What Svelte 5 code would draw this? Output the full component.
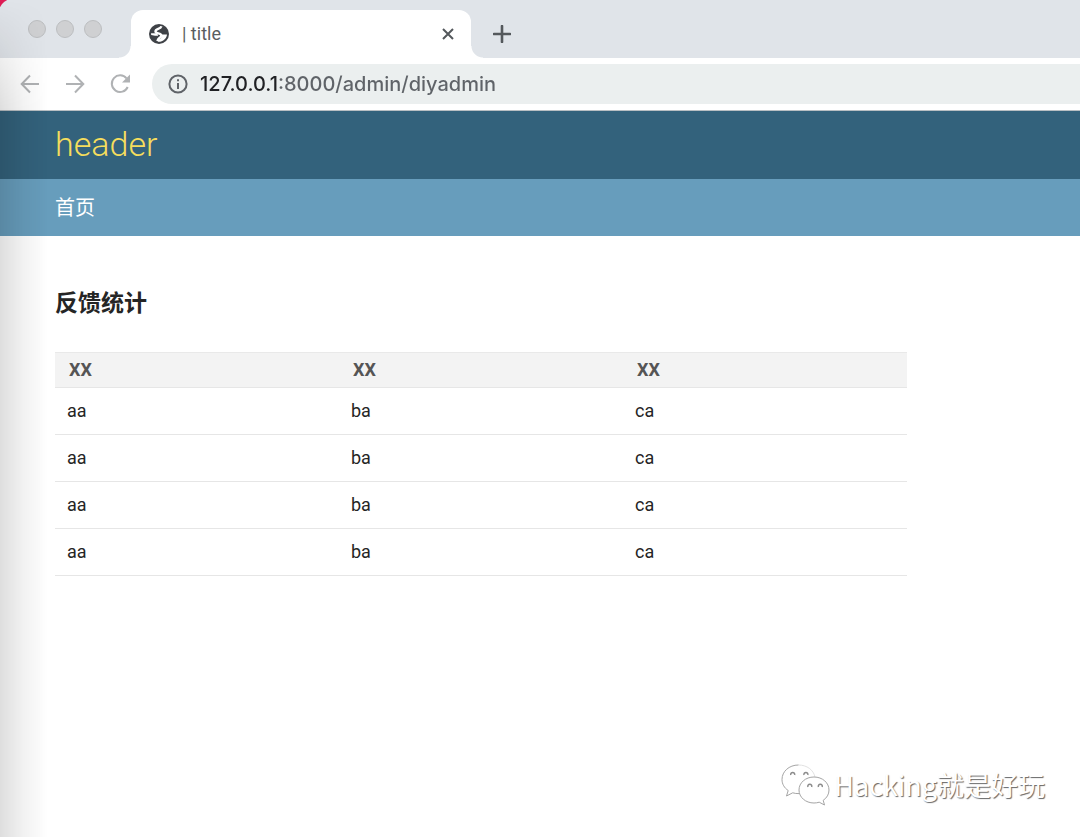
<script>
  const columns = ['XX', 'XX', 'XX'];
  const rows = Array.from({ length: 4 }, () => ['aa', 'ba', 'ca']);
  let address = $state('127.0.0.1:8000/admin/diyadmin');
</script>

<div class="window">
  <div class="tabstrip">
    <div class="lights">
      <button aria-label="Close window"></button>
      <button aria-label="Minimize window"></button>
      <button aria-label="Zoom window"></button>
    </div>
    <div class="tab">
      <svg class="globe" viewBox="0 0 20 20" aria-hidden="true">
        <circle cx="10" cy="10" r="10" fill="#3f4247" />
        <path
          d="M12.400 2.300C11.500 5.500 6.500 4.300 6.500 7.400c0 2.600 5.800 1.200 5.800 4 0 2.500-3.600 2.300-3.800 5.600"
          fill="none"
          stroke="#fff"
          stroke-width="2.400"
        />
        <path d="M2 9.200h4.200c1.900.1 2.900 1.100 2.900 2.500H6L2.200 11zM12 10.400h6c-.4 4-3.800 7.600-9.300 7.300l.2-2.200c2.100-.2 3.800-1.600 3.700-3.500z" fill="#fff" />
      </svg>
      <span class="tab-title">| title</span>
      <button class="icon" aria-label="Close tab">
        <svg width="12" height="12" viewBox="0 0 12 12"><path d="M1 1l10 10M11 1L1 11" stroke="#54585c" stroke-width="2" /></svg>
      </button>
    </div>
    <button class="icon new" aria-label="New tab">
      <svg width="18" height="18" viewBox="0 0 18 18"><path d="M9 1v16M1 9h16" stroke="#54585c" stroke-width="2.600" stroke-linecap="round" /></svg>
    </button>
  </div>

  <div class="toolbar">
    <button class="icon" aria-label="Back">
      <svg width="20" height="20" viewBox="0 0 20 20"><path d="M19 10H2M10 1.500L1.700 10l8.300 8.500" /></svg>
    </button>
    <button class="icon" aria-label="Forward">
      <svg width="20" height="20" viewBox="0 0 20 20"><path d="M1 10h17M10 1.500l8.300 8.500-8.300 8.500" /></svg>
    </button>
    <button class="icon" aria-label="Reload">
      <svg width="20" height="20" viewBox="0 0 20 20">
        <path d="M16.600 4.500A8.300 8.300 0 1 0 17.700 13" />
        <path class="tip" d="M20 .500v8h-8z" />
      </svg>
    </button>
    <div class="omnibox">
      <svg width="20" height="20" viewBox="0 0 20 20" aria-hidden="true">
        <circle cx="10" cy="10" r="8.600" fill="none" stroke="#5f6368" stroke-width="2" />
        <path d="M10 9v6M10 5.200v2" stroke="#5f6368" stroke-width="2" />
      </svg>
      <input type="text" aria-label="Address" bind:value={address} />
    </div>
  </div>

  <header><a href="#top">header</a></header>
  <nav><a href="#home">首页</a></nav>

  <main>
    <h1>反馈统计</h1>
    <table>
      <thead>
        <tr>{#each columns as c}<th scope="col">{c}</th>{/each}</tr>
      </thead>
      <tbody>
        {#each rows as row}
          <tr>{#each row as cell}<td>{cell}</td>{/each}</tr>
        {/each}
      </tbody>
    </table>
  </main>

  <div class="shade"></div>

  <div class="watermark">
    <svg width="50" height="44" viewBox="0 0 50 44" aria-hidden="true">
      <path d="M18.500 2C27 2 33.500 7 35 14" class="faint" />
      <path d="M18.500 2C9 2 2 8.500 2 16.500c0 4.600 2.400 8.500 6.200 11L6.500 33l6.200-3.200c2 .6 4 .9 6.300.8" />
      <path d="M34 14c-8.500 0-15 5.800-15 13s6.500 13 15 13c1.900 0 3.600-.3 5.200-.8L44.500 42l-1.300-4.700C46.800 35 49 31.300 49 27c0-7.200-6.500-13-15-13z" />
      <path class="eyes" d="M10.800 12a2 2 0 1 1 3.800 0M24 12a2 2 0 1 1 3.800 0M28 24a2 2 0 1 1 3.600 0M38.500 24a2 2 0 1 1 3.600 0" />
    </svg>
    <span>Hacking就是好玩</span>
  </div>
</div>

<style>
  :global(body) {
    margin: 0;
    background: #fff;
  }
  .window {
    position: relative;
    min-height: 100vh;
    font-family: Roboto, 'Noto Sans CJK SC', sans-serif;
    color: #252525;
    overflow: hidden;
  }
  button {
    border: 0;
    padding: 0;
    background: none;
  }
  a {
    color: inherit;
    text-decoration: none;
  }
  .icon {
    display: flex;
  }
  .tabstrip {
    display: flex;
    align-items: flex-end;
    height: 58px;
    background: radial-gradient(circle at 14px 14px, #e0e4e9 15px, #dd1c55 16px) 0 0 / 14px 14px no-repeat, #e0e4e9;
  }
  .lights {
    display: flex;
    gap: 10px;
    width: 103px;
    padding-left: 28px;
    align-self: center;
  }
  .lights button {
    box-sizing: border-box;
    width: 18px;
    height: 18px;
    border: 1px solid #bcbec0;
    border-radius: 50%;
    background: #cfd0d2;
  }
  .tab {
    position: relative;
    display: flex;
    align-items: center;
    box-sizing: border-box;
    width: 340px;
    height: 48px;
    padding: 0 17px 0 18px;
    border-radius: 12px 12px 0 0;
    background: #fff;
  }
  .tab::before,
  .tab::after {
    content: '';
    position: absolute;
    bottom: 0;
    width: 12px;
    height: 12px;
  }
  .tab::before {
    left: -12px;
    background: radial-gradient(circle at 0 0, transparent 11px, #fff 12px);
  }
  .tab::after {
    right: -12px;
    background: radial-gradient(circle at 100% 0, transparent 11px, #fff 12px);
  }
  .globe {
    width: 20px;
    height: 20px;
  }
  .tab-title {
    flex: 1;
    margin-left: 13px;
    font-size: 18px;
    line-height: 20px;
    color: #5a5d60;
  }
  .new {
    margin: 0 0 15px 22px;
  }
  .toolbar {
    display: flex;
    align-items: center;
    gap: 25px;
    height: 52px;
    padding-left: 20px;
    border-bottom: 1px solid #b9bfc3;
  }
  .toolbar .icon path {
    fill: none;
    stroke: #b0b2b4;
    stroke-width: 2;
  }
  .toolbar .icon .tip {
    fill: #b0b2b4;
    stroke: none;
  }
  .omnibox {
    display: flex;
    align-items: center;
    flex: 1;
    gap: 12px;
    height: 40px;
    margin-left: -3px;
    padding-left: 16px;
    border-radius: 20px 0 0 20px;
    background: #ebefef;
  }
  input {
    flex: 1;
    min-width: 0;
    padding: 0;
    border: 0;
    outline: 0;
    font: 500 20px/28px Inter, sans-serif;
    color: transparent;
    caret-color: #202124;
    background: linear-gradient(90deg, #202124 79px, #5f6368 79px);
    background-clip: text;
  }
  header {
    height: 68px;
    padding-left: 55px;
    font-size: 34px;
    font-weight: 300;
    line-height: 67px;
    color: #f5dd5d;
    background: #33627c;
  }
  nav {
    height: 57px;
    padding-left: 55px;
    font-size: 20px;
    line-height: 58px;
    color: #fff;
    background: #679dbc;
  }
  main {
    padding: 50px 173px 48px 55px;
  }
  h1 {
    margin: 0 0 30px;
    font-size: 23px;
    line-height: 36px;
    font-weight: 700;
  }
  table {
    width: 100%;
    table-layout: fixed;
    border-collapse: collapse;
    text-align: left;
  }
  tr {
    border-bottom: 1px solid #e6e6e6;
  }
  thead tr {
    border-top: 1px solid #e9e9e9;
    background: #f3f3f3;
  }
  th {
    padding: 0 14px;
    font-size: 18px;
    line-height: 34px;
    color: #555;
  }
  td {
    padding: 0 12px;
    font-size: 18px;
    line-height: 46px;
  }
  .shade {
    position: absolute;
    inset: 0 auto 0 0;
    width: 48px;
    background: linear-gradient(90deg, rgba(0, 0, 0, 0.13), rgba(0, 0, 0, 0.05) 50%, transparent);
    mask-image: linear-gradient(transparent, #000 110px);
    pointer-events: none;
  }
  .watermark {
    position: absolute;
    right: 35px;
    bottom: 30px;
    display: flex;
    align-items: center;
    gap: 4px;
    font: 27px/44px 'Noto Sans CJK SC', sans-serif;
    color: #fff;
    text-shadow: 1px 1px 1px #666;
  }
  .watermark path {
    fill: #fff;
    stroke: #a5a5a5;
    stroke-width: 1;
  }
  .watermark .faint {
    stroke: #e2e2e2;
  }
  .watermark .eyes {
    stroke: #8c8c8c;
    stroke-width: 1.5;
  }
</style>
